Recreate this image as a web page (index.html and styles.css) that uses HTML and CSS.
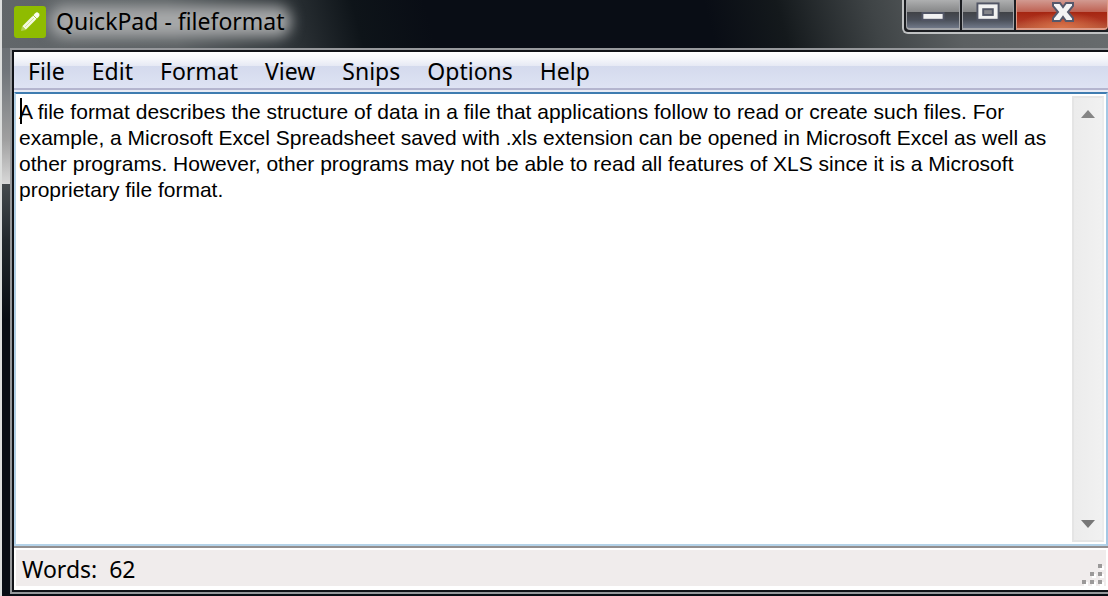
FILE: index.html
```html
<!DOCTYPE html>
<html lang="en">
<head>
<meta charset="utf-8">
<title>QuickPad - fileformat</title>
<link rel="stylesheet" href="styles.css">
</head>
<body>
<div class="frame">
  <header class="titlebar">
    <svg class="app-icon" viewBox="0 0 32 32" aria-hidden="true">
      <rect width="32" height="32" rx="3" fill="#8fbc00"/>
      <path d="M10 22 20 12" stroke="#f4f9df" stroke-width="5"/>
      <path d="m21 11 2-2" stroke="#fbfdee" stroke-width="5" stroke-linecap="round"/>
      <path d="m7 25 1-5 4 4z" fill="#b4d252"/>
      <path d="m11 21 9-9" stroke="#d5e69b" stroke-width="1"/>
      <path d="m19 9 4 4" stroke="#a9cc3c" stroke-width="1"/>
    </svg>
    <h1 class="title">QuickPad - fileformat</h1>
    <div class="controls">
      <button class="control minimize" aria-label="Minimize">
        <svg viewBox="0 0 54 28"><rect x="16" y="13" width="22" height="7" fill="#f2f2f2" stroke="#525666" stroke-width="2"/></svg>
      </button>
      <button class="control maximize" aria-label="Maximize">
        <svg viewBox="0 0 52 28"><rect x="15" y="3" width="22" height="17" fill="#f2f2f2" stroke="#525666" stroke-width="2"/><rect x="21" y="9" width="10" height="6" fill="#85858a" stroke="#525666" stroke-width="2"/></svg>
      </button>
      <button class="control close" aria-label="Close">
        <svg viewBox="0 0 90 28"><path d="M36 3h7l3 4 3-4h7v3l-5 6 5 6v3h-7l-3-4-3 4h-7v-3l5-6-5-6z" fill="#f4f4f4" stroke="#55586b" stroke-width="2"/></svg>
      </button>
    </div>
  </header>
  <main class="window">
    <nav class="menubar">
      <button class="menu">File</button>
      <button class="menu">Edit</button>
      <button class="menu">Format</button>
      <button class="menu">View</button>
      <button class="menu">Snips</button>
      <button class="menu">Options</button>
      <button class="menu">Help</button>
    </nav>
    <section class="editor">
      <textarea class="text" aria-label="Document text" spellcheck="false">A file format describes the structure of data in a file that applications follow to read or create such files. For example, a Microsoft Excel Spreadsheet saved with .xls extension can be opened in Microsoft Excel as well as other programs. However, other programs may not be able to read all features of XLS since it is a Microsoft proprietary file format.</textarea>
      <span class="caret"></span>
      <div class="scrollbar">
        <button class="arrow" aria-label="Scroll up"><svg viewBox="0 0 14 8"><path d="M7 0 14 8H0z" fill="#858585"/></svg></button>
        <button class="arrow" aria-label="Scroll down"><svg viewBox="0 0 14 8"><path d="M0 0h14L7 8z" fill="#777"/></svg></button>
      </div>
    </section>
    <footer class="status">
      <span class="words">Words:&nbsp; 62</span>
      <svg class="grip" viewBox="0 0 20 20" aria-hidden="true">
        <path d="M18 2h4v4h-4zM10 10h4v4h-4zM18 10h4v4h-4zM2 18h4v4H2zM10 18h4v4h-4zM18 18h4v4h-4z" fill="#fff"/>
        <path d="M16 0h4v4h-4zM8 8h4v4H8zM16 8h4v4h-4zM0 16h4v4H0zM8 16h4v4H8zM16 16h4v4h-4z" fill="#9b9999"/>
      </svg>
    </footer>
  </main>
</div>
</body>
</html>
```
FILE: styles.css
```css
* { box-sizing: border-box; }
body { margin: 0; background: #080d14; }
button { font: inherit; color: inherit; border: 0; padding: 0; background: none; }
svg { display: block; }

.frame {
  display: flex;
  flex-direction: column;
  height: 100vh;
  padding: 0 0 2px 8px;
  border-left: 2px solid #dcdedd;
  overflow: hidden;
  background:
    linear-gradient(#62676a 0, #70757a 70px, #a0a0a0 140px, #d8d8d8 184px, #444a4d 184px, #23292d 240px, #080d14 320px) left / 8px 100% no-repeat,
    #080d14;
}

.titlebar {
  display: flex;
  align-items: flex-start;
  height: 48px;
  flex: none;
  margin-left: -8px;
  padding-left: 12px;
  overflow: hidden;
  background: linear-gradient(75deg, #62676a 0, #5b6063 170px, #2a3034 290px, #0e1419 350px, #090d15 420px, #090d15 690px, #14191c 760px, #3f4446 850px, #5c6062 930px, #686c6e 100%);
}
.app-icon { width: 32px; height: 32px; margin-top: 6px; position: relative; z-index: 1; }
.title {
  position: relative;
  z-index: 0;
  margin: 4px 0 0 10px;
  font: 400 23px/35px "Noto Sans", sans-serif;
  color: #000;
  white-space: nowrap;
}
.title::before {
  content: "";
  position: absolute;
  z-index: -1;
  inset: 2px -6px 2px -6px;
  border-radius: 14px;
  background: #a6a8a9;
  filter: blur(7px);
}
.controls {
  display: flex;
  height: 34px;
  margin-left: auto;
  border: 2px solid #c0c2c3;
  border-top: 0;
  border-right: 0;
  border-radius: 0 0 0 6px;
  background: #1b1d21;
  padding: 0 0 2px 2px;
  gap: 2px;
}
.control {
  width: 54px;
  height: 30px;
  border: solid #a4a6aa;
  border-width: 0 1px 2px;
  background: linear-gradient(#aeafb0 0, #858687 12px, #404246 12px, #4b505a 20px, #707888 28px);
}
.minimize { border-radius: 0 0 0 4px; }
.control svg { width: 100%; height: 28px; }
.maximize { width: 52px; }
.close {
  width: 92px;
  border-color: #df9b87;
  border-radius: 0 0 4px 0;
  background: radial-gradient(ellipse 46px 16px at 50% 100%, #d9744a 0, #d9744a00 100%),
    linear-gradient(#d29a91 0, #be6152 12px, #a52511 12px, #ae3420 20px, #b75538 28px);
}

.window {
  flex: 1;
  min-height: 0;
  display: flex;
  flex-direction: column;
  border: solid #96989b;
  border-width: 2px 0 2px 2px;
  box-shadow: inset 2px 2px #111318, inset 0 -2px #111318;
  padding: 2px 0 2px 2px;
  font: 400 23px/32px "Noto Sans", sans-serif;
}
.menubar {
  display: flex;
  gap: 27px;
  height: 40px;
  flex: none;
  padding: 2px 14px;
  border-bottom: 2px solid #e9ebf5;
  box-shadow: inset 0 -2px #b4b5cf;
  background: linear-gradient(#fff 0, #f7f8fb 6px, #e6e9f4 14px, #d4daed 14px, #dfe4f4 100%);
}
.menu { height: 34px; }

.editor {
  position: relative;
  flex: 1;
  min-height: 0;
  display: flex;
  border: 2px solid #b4d2e8;
  border-top-color: #3f7cb0;
  border-right-color: #a5c8e4;
  background: #fff;
}
.text {
  flex: 1;
  min-width: 0;
  margin: 0;
  border: 0;
  outline: 0;
  resize: none;
  overflow: hidden;
  padding: 5px 0 0 3px;
  background: #fff;
  color: #000;
  font: 400 21px/26px "Liberation Sans", sans-serif;
}
.caret { position: absolute; left: 4px; top: 4px; width: 2px; height: 26px; background: #000; }
.scrollbar {
  display: flex;
  flex-direction: column;
  justify-content: space-between;
  width: 32px;
  margin: 2px 2px 2px 0;
  border: 2px solid #e5e5e5;
  border-right-color: #ececec;
  background: linear-gradient(90deg, #ececec, #f1f1f1);
}
.arrow { display: flex; justify-content: center; align-items: center; height: 32px; }
.arrow svg { width: 14px; height: 8px; }

.status {
  display: flex;
  justify-content: space-between;
  align-items: center;
  height: 44px;
  flex: none;
  border: solid #fff;
  border-width: 4px 2px;
  border-image: linear-gradient(#928f90 0 2px, #fff 2px) 4 2;
  background: #f0ecec;
  padding: 2px 4px 0 6px;
}
.grip { width: 20px; height: 20px; align-self: flex-end; margin-bottom: 2px; overflow: visible; }
```
